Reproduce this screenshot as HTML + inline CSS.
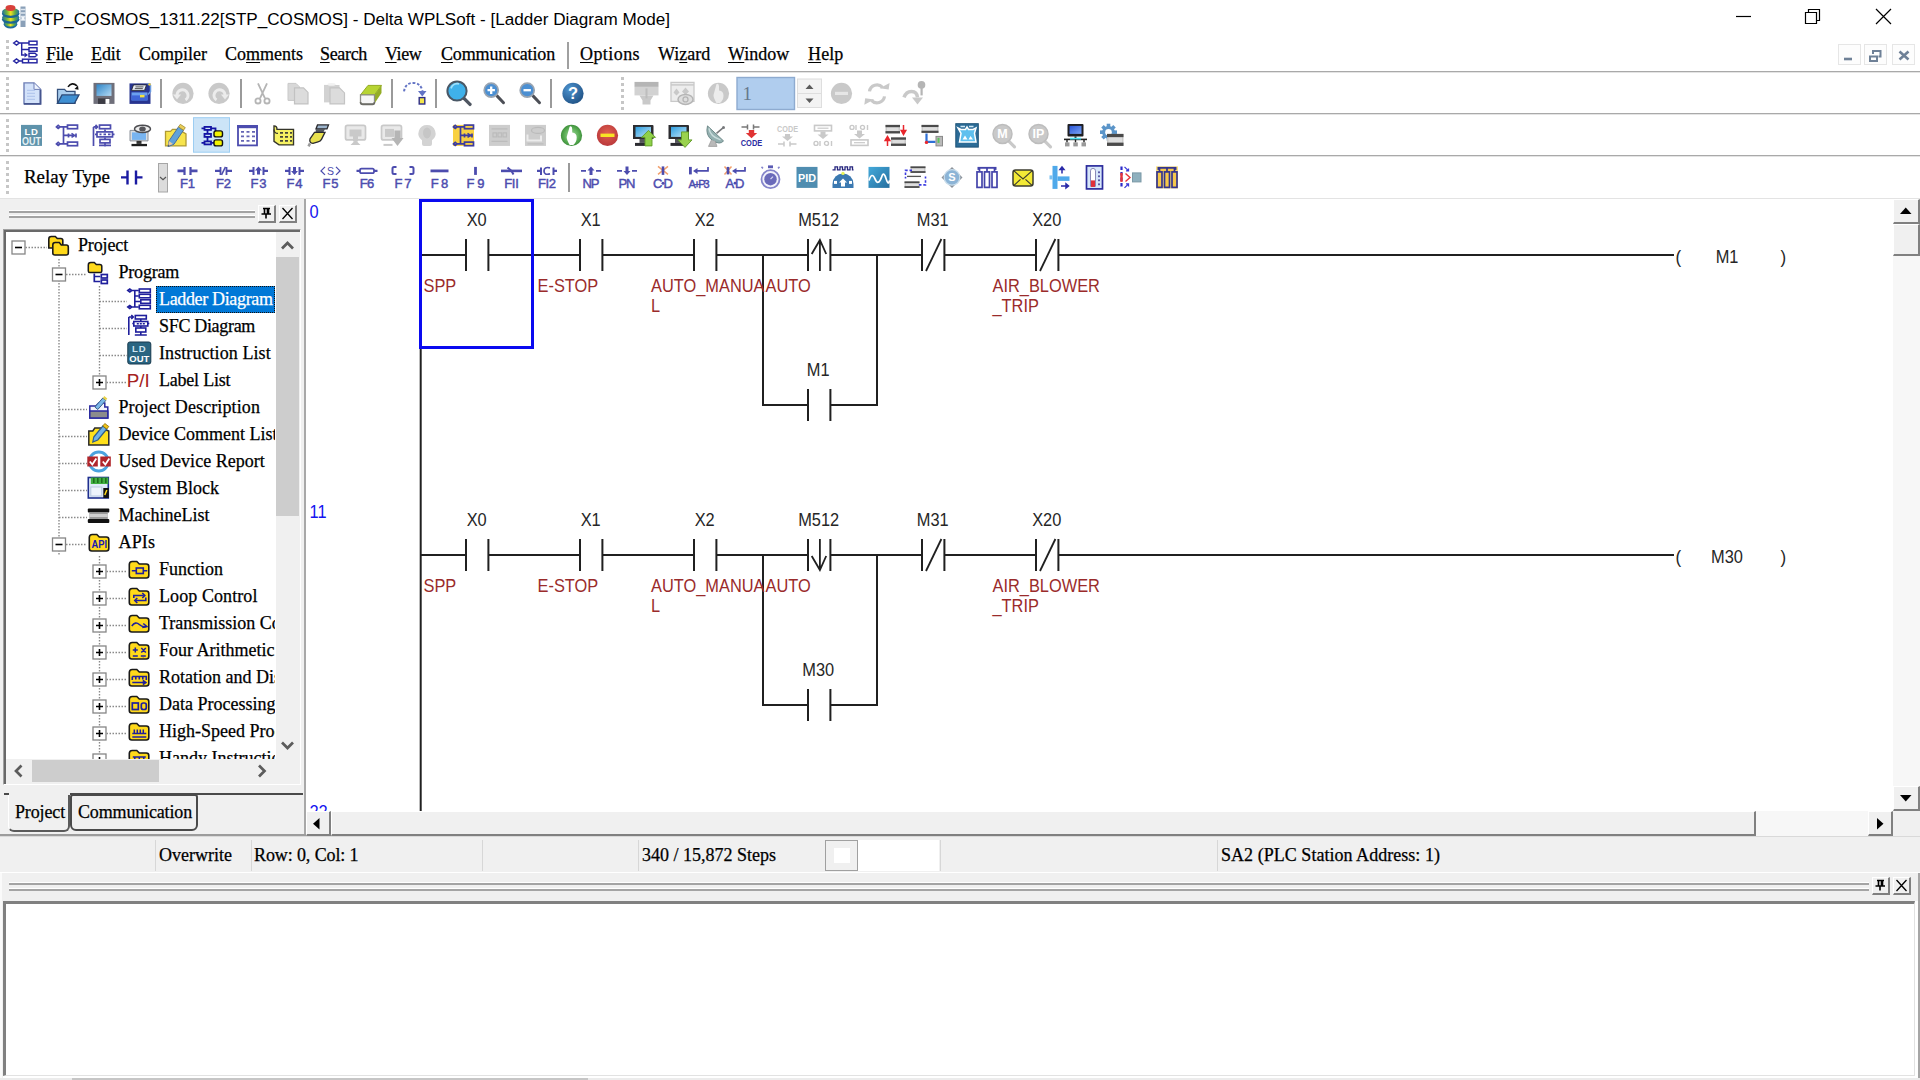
<!DOCTYPE html>
<html><head><meta charset="utf-8"><title>Delta WPLSoft</title>
<style>
*{margin:0;padding:0;box-sizing:border-box}
html,body{width:1920px;height:1080px;overflow:hidden;background:#fff}
body{position:relative;font-family:"Liberation Serif",serif;font-size:18px;color:#000}
.a{position:absolute}
.t{position:absolute;white-space:nowrap;line-height:27px;height:27px;-webkit-text-stroke:.25px currentColor}
.sans{font-family:"Liberation Sans",sans-serif}
.hl{position:absolute;left:0;width:1920px;height:1px}
.b3{position:absolute;background:#f0f0f0;border-style:solid;border-width:1px 2px 2px 1px;border-color:#fff #808080 #808080 #fff}
.grip{position:absolute;height:3px;border-top:1px solid #fff;border-bottom:2px solid #a4a4a4}
.vsep{position:absolute;width:2px;background:#9a9a9a}
.dots{position:absolute;width:2.5px;background-image:linear-gradient(#c6c6c6 42%,transparent 42%);background-size:3px 6px}
u{text-decoration:underline;text-underline-offset:2px;text-decoration-thickness:1px}
svg{position:absolute;overflow:visible}
</style></head><body>
<div class="a sans" style="left:31px;top:8.5px;font-size:17.1px;line-height:22px;white-space:nowrap;color:#000">STP_COSMOS_1311.22[STP_COSMOS] - Delta WPLSoft - [Ladder Diagram Mode]</div>
<svg style="left:1720px;top:0" width="200" height="36" viewBox="1720 0 200 36"><g stroke="#000" stroke-width="1.2" fill="none"><path d="M1736 16.5H1751"/><path d="M1805.5 12.5h11v11h-11z"/><path d="M1808.5 12.5v-3h11v11h-3"/><path d="M1876 9L1891 24M1891 9L1876 24"/></g></svg>
<svg style="left:0;top:0" width="60" height="72" viewBox="0 0 60 72"><defs><linearGradient id="dk" x1="0" y1="0" x2="1" y2="0"><stop offset="0" stop-color="#1f6f9f"/><stop offset=".28" stop-color="#6fb43c"/><stop offset=".5" stop-color="#f2e21e"/><stop offset=".75" stop-color="#5faa46"/><stop offset="1" stop-color="#1f6fa8"/></linearGradient></defs><ellipse cx="10.500" cy="24.300" rx="6.800" ry="4.200" fill="#1d6aa0"/><ellipse cx="10.500" cy="22.800" rx="6.800" ry="3.800" fill="url(#dk)"/><ellipse cx="10.700" cy="19.600" rx="8.800" ry="4.200" fill="#1b6596"/><ellipse cx="10.700" cy="17.600" rx="8.600" ry="3.900" fill="url(#dk)"/><ellipse cx="10.700" cy="13.800" rx="8.800" ry="4.200" fill="#1b6596"/><ellipse cx="10.700" cy="11.800" rx="8.600" ry="3.900" fill="url(#dk)"/><ellipse cx="10.500" cy="8" rx="5" ry="2.900" fill="#d8403a"/><rect x="20.500" y="6.500" width="5" height="20.500" fill="#8aa0b8"/><path d="M20.500 9.500h5M20.500 13h5M20.500 16.500h5M20.500 20h5" stroke="#dfe7f0" stroke-width="1.300"/><rect x="21.500" y="17" width="3" height="3" fill="#f3f6fa"/><g fill="none" stroke="#2626a2" stroke-width="1.450"><path d="M13.700 43l2.800-2 2.800 2-2.800 2zM13.700 61l2.800-2 2.800 2-2.800 2zM19.500 43h9.500M21.700 43v12h3M21.700 49.500h7.300M19.500 61h3"/><rect x="29" y="41.200" width="8" height="3.600"/><rect x="29" y="47.700" width="8" height="3.600"/><path d="M29 53.200h6l2 1.800-2 1.800h-6z"/><rect x="22.500" y="59.200" width="14.500" height="3.600"/><path d="M28.500 59.200v3.600"/></g><path d="M24.500 52.500l3.500 2.500-3.500 2.500z" fill="#2626a2"/></svg>
<div class="t" style="left:46px;top:41.2px;letter-spacing:-0.255px;"><u>F</u>ile</div>
<div class="t" style="left:91px;top:41.2px;letter-spacing:-0.125px;"><u>E</u>dit</div>
<div class="t" style="left:139px;top:41.2px;">Com<u>p</u>iler</div>
<div class="t" style="left:225px;top:41.2px;">Co<u>m</u>ments</div>
<div class="t" style="left:320px;top:41.2px;letter-spacing:-0.33px;"><u>S</u>earch</div>
<div class="t" style="left:385px;top:41.2px;letter-spacing:-0.355px;"><u>V</u>iew</div>
<div class="t" style="left:441px;top:41.2px;letter-spacing:-0.154px;"><u>C</u>ommunication</div>
<div class="t" style="left:580px;top:41.2px;letter-spacing:0.426px;"><u>O</u>ptions</div>
<div class="t" style="left:658px;top:41.2px;">Wi<u>z</u>ard</div>
<div class="t" style="left:728px;top:41.2px;"><u>W</u>indow</div>
<div class="t" style="left:808px;top:41.2px;letter-spacing:0.125px;"><u>H</u>elp</div>
<div class="a" style="left:567px;top:42px;width:1.5px;height:27px;background:#a0a0a0"></div>
<div class="a" style="left:1838px;top:44px;width:23px;height:21px;border:1px solid #e6e6e6;background:#fdfdfd"></div>
<div class="a" style="left:1864px;top:44px;width:23px;height:21px;border:1px solid #e6e6e6;background:#fdfdfd"></div>
<div class="a" style="left:1892px;top:44px;width:23px;height:21px;border:1px solid #e6e6e6;background:#fdfdfd"></div>
<svg style="left:1836px;top:42px" width="84" height="26" viewBox="1836 42 84 26"><g fill="none" stroke="#6f8197" stroke-width="2"><path d="M1844 59H1852" stroke-width="2.6"/><path d="M1870 56.5h7v4.5h-7z"/><path d="M1873 54v-3h7.5v5.5h-2"/><path d="M1899.5 51.5L1908.5 59.5M1908.5 51.5L1899.5 59.5" stroke-width="2.6"/></g></svg>
<div class="hl" style="top:71px;background:#a9a9a9"></div>
<div class="hl" style="top:72px;background:#e4e4e4"></div>
<div class="hl" style="top:113px;background:#a9a9a9"></div>
<div class="hl" style="top:114px;background:#e4e4e4"></div>
<div class="hl" style="top:155px;background:#a9a9a9"></div>
<div class="hl" style="top:156px;background:#e4e4e4"></div>
<div class="hl" style="top:198px;background:#e3e3e3"></div>
<div class="dots" style="left:6px;top:40px;height:30px"></div>
<div class="dots" style="left:6px;top:77px;height:33px"></div>
<div class="dots" style="left:6px;top:119px;height:33px"></div>
<div class="dots" style="left:6px;top:161px;height:33px"></div>
<div class="dots" style="left:621px;top:77px;height:33px"></div>
<svg style="left:0;top:72px" width="1920" height="127" viewBox="0 72 1920 127">
<g transform="translate(32 93.4)"><path d="M-8 -10.500h10l6.500 6.500v14.500h-16.500z" fill="#d3e2fa" stroke="#6e7fb6" stroke-width="1.400"/><path d="M-8 10.500h16.500v-14.500" fill="none" stroke="#46558e" stroke-width="1.800"/><path d="M2 -10.500v6.500h6.500" fill="#eef4ff" stroke="#6e7fb6" stroke-width="1"/><path d="M-5 -3h8M-5 0h8M-5 3h8M-5 6h8" stroke="#b4c8ee" stroke-width="1.200"/></g><g transform="translate(68 93.4)"><path d="M-10.500 -4h7l2 2h8.500v12h-17.500z" fill="#a9cdee" stroke="#34507c" stroke-width="1.300"/><path d="M-10.500 10l4.500-8.500h17l-4.500 8.500z" fill="#3f8fd2" stroke="#2c4a78" stroke-width="1.300"/><path d="M0 -6.500q4-5.500 9-1" fill="none" stroke="#111" stroke-width="1.600"/><path d="M6.500 -4.500l4 .8-.5-4.300z" fill="#111"/></g><g transform="translate(104 93.4)"><rect x="-10.500" y="-10.500" width="21" height="21" fill="#6f6f7a"/><defs><linearGradient id="sv" x1="0" y1="0" x2="1" y2="1"><stop offset="0" stop-color="#2f86c8"/><stop offset="1" stop-color="#b3daf4"/></linearGradient></defs><rect x="-7.500" y="-9" width="15" height="11.500" fill="url(#sv)"/><rect x="-6" y="5" width="12" height="5.500" fill="#3c3c44"/><rect x="1.500" y="5.500" width="4" height="5" fill="#fff"/></g><g transform="translate(140 93.4)"><rect x="-10.500" y="-10" width="21" height="20.500" fill="#27348f"/><path d="M-6.500 -8.500h13l-2 5.500h-13z" fill="#e9edf5" stroke="#222" stroke-width=".8"/><path d="M-4.500 -6.500h8M-5.200 -4.800h8" stroke="#555" stroke-width="1"/><rect x="-8.500" y="-1" width="16" height="8" fill="#6aa0f0"/><rect x="-8.500" y="2" width="16" height="5" fill="#3f66d8"/><rect x="0" y="1.500" width="4.500" height="2.500" fill="#f4e23c"/><path d="M7.500 -10l3 2v6l-2.500 3" fill="none" stroke="#6a9ae0" stroke-width="1.500"/><circle cx="9.500" cy="-9" r="1.200" fill="#f0d030"/></g><g transform="translate(183 93.4)"><circle r="10.600" fill="#c9c9c9"/><path d="M-6 2.500a5.500 5.500 0 1 1 8.500 4" fill="none" stroke="#ececec" stroke-width="3"/><path d="M-10 1h8l-4 5z" fill="#ececec"/></g><g transform="translate(219 93.4)"><circle r="10.600" fill="#c9c9c9"/><path d="M6 2.500a5.500 5.500 0 1 0 -8.500 4" fill="none" stroke="#ececec" stroke-width="3"/><path d="M10 1h-8l4 5z" fill="#ececec"/></g><g transform="translate(262.5 93.4)"><g fill="none" stroke="#b5b5b5" stroke-width="1.800"><path d="M-4.500 -10l7 15M4.500 -10l-7 15"/><circle cx="-4.500" cy="7.500" r="2.600"/><circle cx="4.500" cy="7.500" r="2.600"/></g></g><g transform="translate(298 93.4)"><path d="M-10 -10h8l3.500 3.500v13.500h-11.500z" fill="#d8d8d8" stroke="#c9c9c9" stroke-width="1"/><path d="M-3.500 -5.500h9l4.500 4.500v11.500h-13.500z" fill="#dcdcdc" stroke="#c2c2c2" stroke-width="1.200"/></g><g transform="translate(334 93.4)"><path d="M-10 -8.500h6q2-2.500 5.500 0h4v6h-15.500z" fill="#d0d0d0"/><rect x="-10" y="-8.500" width="12" height="17.500" fill="#d2d2d2"/><path d="M-4 -5.500h9.500l5 5v11h-14.500z" fill="#dcdcdc" stroke="#c4c4c4" stroke-width="1.200"/><ellipse cx="-2.500" cy="-9" rx="4" ry="1.300" fill="#f2f2f2"/></g><g transform="translate(371 93.4)"><path d="M-10.500 1.500l7.500-9.500h13.500l-7 9.500z" fill="#b7d433" stroke="#93ab22" stroke-width="1"/><path d="M3.500 1.500l7-9.500v7.500l-7 10.500z" fill="#94ad25"/><path d="M-10.500 1.500h14v7q0 2-2 2h-10q-2 0-2-2z" fill="#f6f6f6" stroke="#8d8d86" stroke-width="1.300"/><path d="M-10.500 8.500q0 2.500 2.500 2.500h9.500q2 0 2-2.500" fill="none" stroke="#6c6c66" stroke-width="1.600"/></g><g transform="translate(414 93.4)"><path d="M-10 -2q1.500-8.500 9-8.500t9.500 8" fill="none" stroke="#6273c4" stroke-width="2" stroke-dasharray="2.600 1.800"/><path d="M4 -2.500h8.500l-4.250 5.500z" fill="#6273c4"/><rect x="5.200" y="4.200" width="5.600" height="6.400" fill="#f3e54b" stroke="#2d2d86" stroke-width="1.400"/></g><g transform="translate(457.5 93.4)"><path d="M6.500 5l6 6" stroke="#4f5661" stroke-width="3.400" stroke-linecap="round"/><circle cx="-.5" cy="-2.400" r="9.600" fill="#3fb1ea" stroke="#4a5866" stroke-width="2"/><path d="M-6.500 -5a7 7 0 0 1 8-4.500" fill="none" stroke="#9fe0fb" stroke-width="1.800"/></g><g transform="translate(493.5 93.4)"><path d="M3.500 2.500l6.500 6.800" stroke="#4c4f56" stroke-width="3" stroke-linecap="round"/><circle cx="-2.300" cy="-3.200" r="7" fill="#4b8fd2" stroke="#9aa4b0" stroke-width="1.700"/><path d="M-6 -3.200h7.400M-2.300 -6.900v7.400" stroke="#fff" stroke-width="2.300"/></g><g transform="translate(529.5 93.4)"><path d="M3.500 2.500l6.500 6.800" stroke="#4c4f56" stroke-width="3" stroke-linecap="round"/><circle cx="-2.300" cy="-3.200" r="7" fill="#4b8fd2" stroke="#9aa4b0" stroke-width="1.700"/><path d="M-6 -3.200h7.400" stroke="#fff" stroke-width="2.300"/></g><g transform="translate(573 93.4)"><defs><radialGradient id="hg" cx=".35" cy=".3" r=".8"><stop offset="0" stop-color="#4d93cf"/><stop offset="1" stop-color="#1e4f82"/></radialGradient></defs><circle r="10.600" fill="url(#hg)"/><text x="0" y="6" font-family="'Liberation Sans',sans-serif" font-weight="bold" font-size="16.500" fill="#fff" text-anchor="middle">?</text></g><g transform="translate(646.5 93.4)"><rect x="-12" y="-11.500" width="24" height="5" fill="#b5b5b5"/><rect x="-12" y="-6.500" width="24" height="8.500" fill="#d2d2d2"/><path d="M-7 2h14l-3 5v4h-8v-4z" fill="#c9c9c9"/><path d="M0 -5v10" stroke="#bdbdbd" stroke-width="2"/></g><g transform="translate(682.5 93.4)"><rect x="-11.500" y="-11" width="23" height="19" fill="#ededed" stroke="#c9c9c9" stroke-width="1.300"/><path d="M-11.500 -8.500h23" stroke="#c9c9c9" stroke-width="1.500"/><path d="M-6 -5l3 4-3 3-3-3zM3 -6l3.500 4-3.500 3.500-3.500-3.500z" fill="#c9c9c9"/><ellipse cx="3" cy="6" rx="7.500" ry="5" fill="#dedede" stroke="#b5b5b5" stroke-width="1.500"/><circle cx="3" cy="6" r="2.500" fill="none" stroke="#b5b5b5" stroke-width="1.300"/></g><g transform="translate(718.5 93.4)"><circle r="10.600" fill="#c9c9c9"/><path d="M-2 -9.500q2.500-1 2.500 2.500v4q4.500.5 4.500 5t-3.500 7.500h-3.500q-3-5-3-8z" fill="#ececec"/></g><g transform="translate(841.5 93.4)"><circle r="10.600" fill="#c9c9c9"/><rect x="-6.500" y="-1.600" width="13" height="3.200" fill="#e6e6e6"/></g><g transform="translate(877 93.4)"><g fill="none" stroke="#c9c9c9" stroke-width="3.200"><path d="M-7.500 -2a7.500 7.500 0 0 1 13-4"/><path d="M7.500 3a7.500 7.500 0 0 1 -13 4"/></g><path d="M2 -5.500h9v-6.500z" fill="#c9c9c9" transform="rotate(8)"/><path d="M-2 6.500h-9v6.500z" fill="#c9c9c9" transform="rotate(8)"/></g><g transform="translate(914.5 93.4)"><path d="M-10.500 4q2-6 7.500-6t6 6" fill="none" stroke="#c9c9c9" stroke-width="3.500"/><path d="M-2.500 4h11l-5.500 7z" fill="#c9c9c9"/><circle cx="7" cy="-8.500" r="3.800" fill="#b5b5b5"/><rect x="6" y="-6" width="2.200" height="8" fill="#b5b5b5"/></g>
<g transform="translate(31.5 135.4)"><rect x="-10.500" y="-10.500" width="21" height="21" fill="#5f93ab"/><text x="0" y="-.3" font-family="'Liberation Sans',sans-serif" font-weight="bold" font-size="9.500" fill="#fff" text-anchor="middle" letter-spacing=".8">LD</text><text x="0" y="9.300" font-family="'Liberation Sans',sans-serif" font-weight="bold" font-size="10" fill="#e8f2f6" text-anchor="middle" textLength="19" lengthAdjust="spacingAndGlyphs">OUT</text></g><g transform="translate(67.5 135.4)"><g fill="none" stroke="#4c4cae" stroke-width="1.700"><path d="M-4 -8.500v17M-7.500 -8.500h3.500M-7.500 8.500h3.500M-4 -8.500h4M-4 0h10M-4 8.500h4M-11 -8.500l1.700-1.500 1.800 1.500-1.800 1.500zM-11 8.500l1.700-1.500 1.800 1.500-1.800 1.500z"/><rect x="0" y="-10.300" width="10" height="3.600"/><rect x="0" y="6.700" width="10" height="3.600"/><path d="M1 -2v4M4 -2l3 2-3 2M8.500 -2v4"/></g></g><g transform="translate(103.5 135.4)"><g fill="none" stroke="#4c4cae" stroke-width="1.700"><path d="M-10 -8.500v19M-10 -8.500h3.500M-8 -10.500l2 2-2 2M1.500 -6v2.500M1.500 2v2M1.500 7.500v3.500M-4.500 10h12M-6.500 -1h-2M11 -1h-2"/><rect x="-4" y="-10.300" width="11" height="3.600"/><rect x="-6.500" y="-3.500" width="15.500" height="5"/><rect x="-3.500" y="4" width="10" height="3.500"/><path d="M-4 -1h2M0 -1h2.500M4.500 -1h2.500"/></g></g><g transform="translate(139.5 135.4)"><path d="M-9.500 -5h16q2 0 2 2v8.500h-18z" fill="#d9dde2" stroke="#8b9098" stroke-width="1"/><rect x="-7.500" y="-3" width="14" height="7.500" fill="#78b4f0"/><rect x="-3" y="5.500" width="5" height="3" fill="#333"/><rect x="-8" y="8.500" width="15.500" height="2.300" fill="#1e1e1e"/><ellipse cx="3" cy="-6.500" rx="8" ry="3.700" fill="#ececec" stroke="#4c4c50" stroke-width="1.500"/><ellipse cx="3" cy="-6.500" rx="3.300" ry="2.500" fill="#55555a"/></g><g transform="translate(175.5 135.4)"><path d="M-10 -4h5l2-2h6l7.500 4.500v12h-20.500z" fill="#f7e44c" stroke="#b09a34" stroke-width="1.300"/><path d="M-6.500 5.500l9.500-14 5 3.300-9.500 14-6 2.500z" fill="#5fa2da" stroke="#4a6f9c" stroke-width="1"/><path d="M3 -8.500l1.800-2.600 5 3.300-1.800 2.600z" fill="#e9cf5a" stroke="#a08a30" stroke-width=".8"/><path d="M-6.500 5.500l-1 5 5-2z" fill="#e8c9a0"/><path d="M-7.500 10.500l1.500-.6-1.200-.9z" fill="#333"/></g><g transform="translate(211.5 135.4)"><rect x="-18" y="-17.700" width="36" height="34.500" fill="#cce4f7" stroke="#9ccdf2" stroke-width="1"/><g fill="none" stroke="#1414a4" stroke-width="1.800"><rect x="-7" y="-8.500" width="6.500" height="3"/><rect x="-7" y="-1.500" width="6.500" height="3"/><rect x="-7" y="6" width="6.500" height="3"/><path d="M-4 -5.500v4M-4 1.500v4.500M-.5 -7h4.500v3M-10 -7h3M-10 7.500h3M-.5 7.500h3"/></g><rect x="2.500" y="-4.500" width="8.500" height="6" rx="2" fill="#f2f200" stroke="#111" stroke-width="1.400"/><rect x="2.500" y="4.500" width="8.500" height="6" rx="2" fill="#f2f200" stroke="#111" stroke-width="1.400"/></g><g transform="translate(247.5 135.4)"><rect x="-9.500" y="-9.500" width="19" height="19.500" fill="#fff" stroke="#4c4cae" stroke-width="1.800"/><rect x="-10.400" y="-10.400" width="20.800" height="3.200" fill="#4c4cae"/><g stroke="#6464b4" stroke-width="1.700" stroke-dasharray="3 2.500"><path d="M-6.500 -3.500h14.500M-6.500 1h14.500M-6.500 5.500h14.500"/></g></g><g transform="translate(283.5 135.4)"><path d="M-9.500 -9.500q3 0 3 3.500h16.500v15.500h-14.500l-5-3.500z" fill="#f6f262" stroke="#35352a" stroke-width="1.400"/><path d="M-9.500 -6q0 4 4 4" fill="none" stroke="#35352a" stroke-width="1.300"/><g stroke="#45453a" stroke-width="1.600" stroke-dasharray="3 2"><path d="M-3.500 -2.500h12M-3.500 1.500h12M-3.500 5.500h12"/></g></g><g transform="translate(319.5 135.4)"><path d="M-2 -10.500h11l-1.500 4h-11z" fill="#9cb4cc" stroke="#2a2a2e" stroke-width="1.300"/><path d="M-3.500 -6.500h9l-1.500 3h-8z" fill="#55595f"/><path d="M-9.500 3.500l4.500-6.500h10.500l-3.500 7q-1 2-3.500 2.500l-5 1.500q-4-.5-3-4.500z" fill="#e9e14f" stroke="#2a2a2e" stroke-width="1.300"/><path d="M-9.500 8l-1.500 3" stroke="#9a9a9a" stroke-width="2.500"/></g><g transform="translate(355.5 135.4)"><rect x="-10" y="-10" width="20" height="14.500" rx="2" fill="#e9e9e9" stroke="#c9c9c9" stroke-width="1.700"/><path d="M-6 -6h12v7h-3.500v5h-5v-5h-3.500z" fill="#c9c9c9"/><path d="M-5 9.500l5-5 5 5z" fill="#c9c9c9"/></g><g transform="translate(391.5 135.4)"><rect x="-10" y="-10" width="20" height="14.500" rx="2" fill="#e9e9e9" stroke="#c9c9c9" stroke-width="1.700"/><rect x="-6.500" y="-6.500" width="9" height="8" fill="#c9c9c9"/><rect x="-8" y="8.500" width="9" height="2" fill="#c9c9c9"/><path d="M3 -5h6v7.500h3l-6 8-6-8h3z" fill="#b5b5b5"/></g><g transform="translate(427 135.4)"><path d="M0 -10.500a8.500 8.500 0 0 1 5 15.400v3.600q0 2-2 2h-6q-2 0-2-2v-3.600a8.500 8.500 0 0 1 5-15.400z" fill="#d3d3d3"/><ellipse cx="0" cy="-2.500" rx="4" ry="5.500" fill="#c6c6c6"/></g><g transform="translate(463.5 135.4)"><rect x="-10.500" y="-10.500" width="21" height="21" fill="#f8d142"/><g fill="none" stroke="#3c3ca0" stroke-width="1.700"><path d="M-3 -8.500v17M-3 -8.500h4M-3 0h12M-3 8.500h4M-10 -8.500l1.700-1.500 1.800 1.500-1.800 1.500zM-10 8.500l1.700-1.500 1.800 1.500-1.800 1.500zM-6.500 -8.500h3.500M-6.500 8.500h3.500"/><rect x="1" y="-10.300" width="9" height="3.600"/><rect x="1" y="6.700" width="9" height="3.600"/><path d="M1 -2v4M4 -2l3 2-3 2M8.500 -2v4"/></g></g><g transform="translate(499.5 135.4)"><rect x="-10.500" y="-10.500" width="21" height="21" fill="#cdcdcd"/><g fill="none" stroke="#bcbcbc" stroke-width="1.200"><path d="M-8 -6.500h16M-8 6h16"/><rect x="-6.500" y="-2.500" width="3.500" height="4"/><rect x="-1.500" y="-2.500" width="3.500" height="4"/><rect x="3.500" y="-2.500" width="3.500" height="4"/></g></g><g transform="translate(535.5 135.4)"><rect x="-10.500" y="-10.500" width="21" height="21" fill="#cdcdcd"/><path d="M-8 -1v6h13.500v-5" fill="none" stroke="#ececec" stroke-width="2"/><ellipse cx="2.500" cy="-5" rx="6.500" ry="3" fill="none" stroke="#bababa" stroke-width="1.200"/><path d="M-8 8.500h16" stroke="#bcbcbc" stroke-width="1.200"/></g><g transform="translate(571.5 135.4)"><defs><radialGradient id="gg" cx=".5" cy=".5" r=".6"><stop offset="0" stop-color="#a5dba0"/><stop offset=".6" stop-color="#58ac52"/><stop offset="1" stop-color="#2f7d2f"/></radialGradient></defs><circle r="10.600" fill="url(#gg)"/><path d="M-1.800 -9q2.500-1 2.500 2.500v3.500q4.500.5 4.500 5t-3.500 7.500h-3.500q-3-5-3-8z" fill="#fff"/></g><g transform="translate(607.5 135.4)"><defs><radialGradient id="rg" cx=".5" cy=".4" r=".65"><stop offset="0" stop-color="#e0604f"/><stop offset="1" stop-color="#b7353a"/></radialGradient></defs><circle r="10.600" fill="url(#rg)"/><rect x="-7" y="-1.800" width="14" height="3.400" fill="#f8e425"/></g><g transform="translate(644 135.4)"><path d="M-11 -10.500h19.500q1 0 1 1v13h-20.500z" fill="#2c2c30"/><defs><linearGradient id="mgu" x1="0" y1="0" x2="1" y2="1"><stop offset="0" stop-color="#2f9fe0"/><stop offset="1" stop-color="#bfe4f8"/></linearGradient></defs><rect x="-8.500" y="-8.500" width="15.500" height="10" fill="url(#mgu)"/><rect x="-4.500" y="3.500" width="6" height="4" fill="#55555a"/><rect x="-9" y="7.500" width="15" height="3" fill="#2c2c30"/><path d="M4.500 -5l7 7h-3.500v8.500h-7v-8.500h-3.500z" fill="#8fd04a" stroke="#5f9a26" stroke-width=".9"/></g><g transform="translate(679.5 135.4)"><path d="M-11 -10.500h19.500q1 0 1 1v13h-20.500z" fill="#2c2c30"/><defs><linearGradient id="mgd" x1="0" y1="0" x2="1" y2="1"><stop offset="0" stop-color="#2f9fe0"/><stop offset="1" stop-color="#bfe4f8"/></linearGradient></defs><rect x="-8.500" y="-8.500" width="15.500" height="10" fill="url(#mgd)"/><rect x="-4.500" y="3.500" width="6" height="4" fill="#55555a"/><rect x="-9" y="7.500" width="15" height="3" fill="#2c2c30"/><path d="M2 -3.500h7v8h3.500l-7 7.500-7-7.500h3.500z" fill="#9ad24e" stroke="#5f9a26" stroke-width=".9"/></g><g transform="translate(715.5 135.4)"><path d="M-8 -9.500q-2.500 9.500 5 14.500t11 .5z" fill="#93b0b0" stroke="#6f8a8a" stroke-width="1"/><path d="M-6.500 -7q1 8 11.500 11.500" fill="none" stroke="#c9dcdc" stroke-width="1.500"/><path d="M1 -2l6.500-5.500" stroke="#77797c" stroke-width="1.600"/><circle cx="8" cy="-8" r="1.500" fill="#77797c"/><path d="M-4 4.500l-3 6.500h8.500l-2-5.500" fill="#b9b9b9" stroke="#9a9a9a" stroke-width=".8"/></g><g transform="translate(751.5 135.4)"><g stroke="#787878" stroke-width="1.500" fill="none"><path d="M-10 -8.500h6M-4 -11v5M2 -11v5M2 -8.500h6"/></g><path d="M-2.700 -5.500h5.400v3h3l-5.700 5.300-5.700-5.300h3z" fill="#e03434"/><text x="0" y="11" font-family="'Liberation Sans',sans-serif" font-weight="bold" font-size="9.500" fill="#2c2ca2" text-anchor="middle" textLength="21.500" lengthAdjust="spacingAndGlyphs">CODE</text></g><g transform="translate(787.5 135.4)"><text x="0" y="-3.500" font-family="'Liberation Sans',sans-serif" font-weight="bold" font-size="9.500" fill="#c9c9c9" text-anchor="middle" textLength="21" lengthAdjust="spacingAndGlyphs">CODE</text><path d="M-2.500 -1.500h5v2.500h3l-5.500 4.500-5.500-4.500h3z" fill="#c9c9c9"/><g stroke="#c9c9c9" stroke-width="1.500" fill="none"><path d="M-9.500 8.500h6M-3.500 6v5M2.500 6v5M2.500 8.500h6.500"/></g></g><g transform="translate(823 135.4)"><rect x="-8.500" y="-10" width="17" height="5.500" fill="#fff" stroke="#c9c9c9" stroke-width="1.600"/><path d="M-5.500 -7.200h11" stroke="#c9c9c9" stroke-width="1.200"/><path d="M-2.500 -4h5v3h3l-5.500 4.500-5.500-4.500h3z" fill="#c9c9c9"/><g fill="none" stroke="#c9c9c9" stroke-width="1.400"><circle cx="-7" cy="8" r="2"/><path d="M-3 5.500v5M8.500 5.500v5"/><circle cx="3.500" cy="8" r="2"/></g></g><g transform="translate(859.5 135.4)"><g fill="none" stroke="#c9c9c9" stroke-width="1.400"><circle cx="-7.500" cy="-8" r="2"/><path d="M-3.500 -10.500v5M8 -10.500v5"/><circle cx="3" cy="-8" r="2"/></g><path d="M-2.500 -5h5v3.500h3l-5.500 4.500-5.500-4.500h3z" fill="#c9c9c9"/><rect x="-8.500" y="4.500" width="17" height="5.500" fill="#fff" stroke="#c9c9c9" stroke-width="1.600"/><path d="M-5.500 7.300h11" stroke="#c9c9c9" stroke-width="1.200"/></g><g transform="translate(895.5 135.4)"><rect x="-10" y="-10.5" width="14.5" height="8.5" fill="#c9c9c9"/><rect x="-8.5" y="-8.205" width="11.5" height="3.91" fill="#dedede"/><rect x="-10" y="-10.5" width="14.5" height="2.295" fill="#4a4a4a"/><rect x="-10" y="-4.295" width="14.5" height="2.295" fill="#4a4a4a"/><rect x="-4.5" y="2" width="15" height="8.5" fill="#c9c9c9"/><rect x="-3.0" y="4.295" width="12" height="3.91" fill="#dedede"/><rect x="-4.5" y="2" width="15" height="2.295" fill="#4a4a4a"/><rect x="-4.5" y="8.205" width="15" height="2.295" fill="#4a4a4a"/><g stroke="#e8262c" stroke-width="1.500" fill="#e8262c"><path d="M8 -10.500v9.500M5.700 -5l2.300 4 2.300-4zM-8 10.500v-9.500M-10.300 5l2.300-4 2.300 4z" /></g></g><g transform="translate(931.5 135.4)"><rect x="-10" y="-10.5" width="17" height="8" fill="#c9c9c9"/><rect x="-8.5" y="-8.34" width="14" height="3.6799999999999997" fill="#dedede"/><rect x="-10" y="-10.5" width="17" height="2.16" fill="#4a4a4a"/><rect x="-10" y="-4.66" width="17" height="2.16" fill="#4a4a4a"/><path d="M-5 -2v8.500h9" fill="none" stroke="#2d6fd6" stroke-width="2.200"/><circle cx="-5" cy="7" r="1.700" fill="#e8262c"/><rect x="4.500" y="1" width="6.500" height="9.500" fill="#b9b9b9" stroke="#8a8a8a" stroke-width="1"/><rect x="6" y="2.500" width="2" height="5" fill="#5ec45e"/></g><g transform="translate(967.5 135.4)"><rect x="-11.700" y="-11.700" width="22.500" height="23.400" fill="#2c6c97"/><rect x="-11.700" y="-11.700" width="22.500" height="23.400" fill="none" stroke="#1f5478" stroke-width="1"/><path d="M-9.500 -7.500l3 1.500h4.500l1.500-2.500 1.500 2.500h4.500l3-1.500-1.500 5.500 1.500 8.500h-16.500l1.500-8.500z" fill="#5fc0ee" stroke="#fff" stroke-width="1.500"/><path d="M-5 4l2.500-4 2.500 4zM1 4l2-3.500 2.500 3.500z" fill="#fff"/><path d="M-7 -9h4.500M1.500 -9h4.500" stroke="#cfe8f6" stroke-width="1.500"/></g><g transform="translate(1003.5 135.4)"><path d="M5.500 6l5.500 5.500" stroke="#c9c9c9" stroke-width="3.200" stroke-linecap="round"/><circle cx="-1" cy="-1.500" r="9.500" fill="#c9c9c9" stroke="#bdbdbd" stroke-width="1.500"/><text x="-1" y="2.800" font-family="'Liberation Sans',sans-serif" font-weight="bold" font-size="12.500" fill="#fff" text-anchor="middle">M</text></g><g transform="translate(1039.5 135.4)"><path d="M5.500 6l5.500 5.500" stroke="#c9c9c9" stroke-width="3.200" stroke-linecap="round"/><circle cx="-1" cy="-1.500" r="9.500" fill="#c9c9c9" stroke="#bdbdbd" stroke-width="1.500"/><text x="-1" y="2.800" font-family="'Liberation Sans',sans-serif" font-weight="bold" font-size="12.500" fill="#fff" text-anchor="middle">IP</text></g><g transform="translate(1075.5 135.4)"><rect x="-8" y="-11.500" width="16" height="12.500" rx="1" fill="#1e1e22"/><defs><linearGradient id="ng" x1="0" y1="0" x2="1" y2="1"><stop offset="0" stop-color="#2a55d8"/><stop offset="1" stop-color="#7aa4f4"/></linearGradient></defs><rect x="-6" y="-9.500" width="12" height="8" fill="url(#ng)"/><path d="M0 1v3" stroke="#222" stroke-width="2"/><path d="M-11.500 4h23" stroke="#222" stroke-width="1.600"/><path d="M-5.500 3.200h11" stroke="#4fe0f0" stroke-width="1.800"/><g stroke="#222" stroke-width="1.400"><path d="M-8.500 4v3M0 4v3M8.500 4v3"/></g><rect x="-10.500" y="7" width="4.500" height="4" fill="#9a9a9a"/><rect x="-2.200" y="7" width="4.500" height="4" fill="#9a9a9a"/><rect x="6" y="7" width="4.500" height="4" fill="#9a9a9a"/></g><g transform="translate(1111.5 135.4)"><g transform="translate(-3 -3.200)"><g fill="#5b95c9"><rect x="-1.800" y="-8.500" width="3.600" height="17" transform="rotate(0)"/><rect x="-1.800" y="-8.500" width="3.600" height="17" transform="rotate(45)"/><rect x="-1.800" y="-8.500" width="3.600" height="17" transform="rotate(90)"/><rect x="-1.800" y="-8.500" width="3.600" height="17" transform="rotate(135)"/><circle r="6.300"/></g><circle r="3.300" fill="#fff"/></g><rect x="-4.5" y="-1.5" width="16.5" height="12" fill="#c9c9c9"/><rect x="-3.0" y="1.7400000000000002" width="13.5" height="5.52" fill="#dedede"/><rect x="-4.5" y="-1.5" width="16.5" height="3.24" fill="#4a4a4a"/><rect x="-4.5" y="7.26" width="16.5" height="3.24" fill="#4a4a4a"/></g>
<text x="24" y="183.300" font-family="'Liberation Serif',serif" font-size="18.900" fill="#000" stroke="#000" stroke-width=".25">Relay Type</text><g transform="translate(131.5 177.4)"><path d="M-10.500 0h6.500M4.500 0h6.500" stroke="#1a1aa2" stroke-width="2.400"/><path d="M-4 -7v14M4.500 -7v14" stroke="#1a1aa2" stroke-width="2.400"/></g><rect x="158.500" y="163.500" width="9" height="28.500" fill="#dcdcdc" stroke="#a6a6a6" stroke-width="1"/><path d="M160 177l3 2.600 3-2.600" fill="none" stroke="#555" stroke-width="1.200"/><g transform="translate(187.5 177.4)"><g stroke="#4c4cae" fill="none"><path d="M-10 -6.500h7M3 -6.500h7" stroke-width="2.600"/><path d="M-3 -10.500v8M3 -10.500v8" stroke-width="2.200"/></g><text x="0" y="10.5" font-family="'Liberation Sans',sans-serif" font-size="13" fill="#4c4cae" stroke="#4c4cae" stroke-width=".45" text-anchor="middle" textLength="15" lengthAdjust="spacing">F1</text></g><g transform="translate(223.5 177.4)"><g stroke="#4c4cae" fill="none"><path d="M-8.500 -6.500h5.500M3 -6.500h5.500" stroke-width="2.400"/><path d="M-3 -10.500v8M3 -10.500v8" stroke-width="1.800"/><path d="M2 -10.500l-4 8" stroke-width="1.500"/></g><text x="0" y="10.5" font-family="'Liberation Sans',sans-serif" font-size="13" fill="#4c4cae" stroke="#4c4cae" stroke-width=".45" text-anchor="middle" textLength="15" lengthAdjust="spacing">F2</text></g><g transform="translate(258.5 177.4)"><g stroke="#4c4cae" fill="none"><path d="M-9.500 -6.500h4.500M5 -6.500h4.500" stroke-width="2.400"/><path d="M-5 -10.500v8M5 -10.500v8" stroke-width="2"/></g><path d="M0 -11l3.500 4h-2v4h-3v-4h-2z" fill="#4c4cae"/><text x="0" y="10.5" font-family="'Liberation Sans',sans-serif" font-size="13" fill="#4c4cae" stroke="#4c4cae" stroke-width=".45" text-anchor="middle" textLength="16" lengthAdjust="spacing">F3</text></g><g transform="translate(294.5 177.4)"><g stroke="#4c4cae" fill="none"><path d="M-9.500 -6.500h4.500M5 -6.500h4.500" stroke-width="2.400"/><path d="M-5 -10.500v8M5 -10.500v8" stroke-width="2"/></g><path d="M0 -2.500l3.500-4h-2v-4h-3v4h-2z" fill="#4c4cae"/><text x="0" y="10.5" font-family="'Liberation Sans',sans-serif" font-size="13" fill="#4c4cae" stroke="#4c4cae" stroke-width=".45" text-anchor="middle" textLength="16" lengthAdjust="spacing">F4</text></g><g transform="translate(330.5 177.4)"><g stroke="#4c4cae" fill="none" stroke-width="1.300"><path d="M-5.500 -10.500l-4 4 4 4M5.500 -10.500l4 4-4 4"/></g><text x="0" y="-2.800" font-family="'Liberation Sans',sans-serif" font-size="10.500" fill="#4c4cae" text-anchor="middle">S</text><text x="0" y="10.5" font-family="'Liberation Sans',sans-serif" font-size="13" fill="#4c4cae" stroke="#4c4cae" stroke-width=".45" text-anchor="middle" textLength="16" lengthAdjust="spacing">F5</text></g><g transform="translate(367 177.4)"><g stroke="#4c4cae" fill="none"><path d="M-10.500 -6.500h3.500M7 -6.500h3.500" stroke-width="2.400"/><rect x="-7" y="-8.800" width="14" height="4.600" rx="1.500" stroke-width="1.800"/></g><text x="0" y="10.5" font-family="'Liberation Sans',sans-serif" font-size="13" fill="#4c4cae" stroke="#4c4cae" stroke-width=".45" text-anchor="middle" textLength="14.5" lengthAdjust="spacing">F6</text></g><g transform="translate(403 177.4)"><g stroke="#4c4cae" fill="none" stroke-width="2"><path d="M-6.500 -10.500h-2.500q-1.500 0-1.500 1.500v4q0 1.500 1.500 1.500h2.500M6.500 -10.500h2.500q1.500 0 1.500 1.500v4q0 1.500-1.500 1.500h-2.500"/></g><text x="0" y="10.5" font-family="'Liberation Sans',sans-serif" font-size="13" fill="#4c4cae" stroke="#4c4cae" stroke-width=".45" text-anchor="middle" textLength="17" lengthAdjust="spacing">F7</text></g><g transform="translate(439.5 177.4)"><path d="M-9 -6.500h18" stroke="#4c4cae" stroke-width="2.800"/><text x="0" y="10.5" font-family="'Liberation Sans',sans-serif" font-size="13" fill="#4c4cae" stroke="#4c4cae" stroke-width=".45" text-anchor="middle" textLength="17.5" lengthAdjust="spacing">F8</text></g><g transform="translate(475.5 177.4)"><path d="M0 -10.500v8" stroke="#4c4cae" stroke-width="2.800"/><text x="0" y="10.5" font-family="'Liberation Sans',sans-serif" font-size="13" fill="#4c4cae" stroke="#4c4cae" stroke-width=".45" text-anchor="middle" textLength="18" lengthAdjust="spacing">F9</text></g><g transform="translate(511.5 177.4)"><g stroke="#4c4cae" fill="none"><path d="M-10.500 -6.500h21" stroke-width="2.600"/><path d="M-4 -10l4 3.500 2 3.500" stroke-width="2"/></g><text x="0" y="10.5" font-family="'Liberation Sans',sans-serif" font-size="13" fill="#4c4cae" stroke="#4c4cae" stroke-width=".45" text-anchor="middle" textLength="14.5" lengthAdjust="spacing">FII</text></g><g transform="translate(547 177.4)"><g stroke="#4c4cae" fill="none"><path d="M-10 -6.500h4M6 -6.500h4" stroke-width="2.400"/><path d="M-6 -10v7.500M6.500 -10v7.500" stroke-width="2"/><path d="M3 -9.500q-6-1.500-6 3t6 3" stroke-width="1.700"/></g><text x="0" y="10.5" font-family="'Liberation Sans',sans-serif" font-size="13" fill="#4c4cae" stroke="#4c4cae" stroke-width=".45" text-anchor="middle" textLength="18" lengthAdjust="spacing">FI2</text></g><rect x="568" y="163" width="2" height="29" fill="#9a9a9a"/><g transform="translate(591 177.4)"><g stroke="#4c4cae" fill="none" stroke-width="1.800"><path d="M-10 -6.500h5M5 -6.500h5"/></g><path d="M0 -11l3.500 4h-2v4.500h-3v-4.500h-2z" fill="#4c4cae"/><text x="0" y="10.5" font-family="'Liberation Sans',sans-serif" font-size="13" fill="#4c4cae" stroke="#4c4cae" stroke-width=".45" text-anchor="middle" textLength="17" lengthAdjust="spacing">NP</text></g><g transform="translate(627 177.4)"><g stroke="#4c4cae" fill="none" stroke-width="1.800"><path d="M-10 -6.500h5M5 -6.500h5"/></g><path d="M0 -2.500l3.500-4h-2v-4.500h-3v4.500h-2z" fill="#4c4cae"/><text x="0" y="10.5" font-family="'Liberation Sans',sans-serif" font-size="13" fill="#4c4cae" stroke="#4c4cae" stroke-width=".45" text-anchor="middle" textLength="17" lengthAdjust="spacing">PN</text></g><g transform="translate(663 177.4)"><path d="M-5 -11l10 8M5 -11l-10 8" stroke="#f2a06e" stroke-width="1.500"/><path d="M0 -11v8.500" stroke="#4c4cae" stroke-width="2.600"/><circle cx="0" cy="5.800" r="1.500" fill="#4c4cae"/><text x="0" y="10.5" font-family="'Liberation Sans',sans-serif" font-size="13" fill="#4c4cae" stroke="#4c4cae" stroke-width=".45" text-anchor="middle" textLength="20" lengthAdjust="spacing">C D</text></g><g transform="translate(699 177.4)"><rect x="-10" y="-10.500" width="2.800" height="7.500" fill="#4c4cae"/><g stroke="#4c4cae" fill="none" stroke-width="1.700"><path d="M-4 -6.500h13v-4"/></g><path d="M-6 -6.500l4.500-3v6z" fill="#4c4cae"/><text x="0" y="10.5" font-family="'Liberation Sans',sans-serif" font-size="11" fill="#4c4cae" stroke="#4c4cae" stroke-width=".45" text-anchor="middle" textLength="21" lengthAdjust="spacing">A+P3</text></g><g transform="translate(735 177.4)"><path d="M-10.500 -11l7 8M-3.500 -11l-7 8" stroke="#f2a06e" stroke-width="1.500"/><path d="M-7 -10.500v7.500" stroke="#4c4cae" stroke-width="2.600"/><g stroke="#4c4cae" fill="none" stroke-width="1.700"><path d="M-1 -6.500h11v-4"/></g><path d="M-3 -6.500l4.500-3v6z" fill="#4c4cae"/><circle cx="0" cy="5.800" r="1.400" fill="#4c4cae"/><text x="0" y="10.5" font-family="'Liberation Sans',sans-serif" font-size="13" fill="#4c4cae" stroke="#4c4cae" stroke-width=".45" text-anchor="middle" textLength="19" lengthAdjust="spacing">A D</text></g><g transform="translate(770.5 177.4)"><rect x="-2.500" y="-12" width="5" height="2.800" fill="#5c5cb4"/><path d="M-7.500 -9l-1.500-1.500M7.500 -9l1.500-1.500" stroke="#8585cc" stroke-width="1.500"/><circle cx="0" cy="1.800" r="9" fill="#f2f2fb" stroke="#8484ca" stroke-width="1.800"/><circle cx="0" cy="1.800" r="6.200" fill="#6a6aba"/><path d="M0 1.800l2.500-2.500" stroke="#d8d8f4" stroke-width="1.200"/></g><g transform="translate(807 177.4)"><rect x="-10.500" y="-10.500" width="21" height="21" fill="#4f8db0"/><text x="0" y="4.300" font-family="'Liberation Sans',sans-serif" font-weight="bold" font-size="11.500" fill="#fff" text-anchor="middle" textLength="18" lengthAdjust="spacingAndGlyphs">PID</text></g><g transform="translate(843 177.4)"><path d="M-10.500 -7.500h2.500v-3h2.500v3h2.500v-3h2.500v3h2.500v-3h2.500v3h2.500v-3h2.500v3h1" fill="none" stroke="#26267e" stroke-width="1.300"/><path d="M-10.500 10.500v-4a10.500 10.500 0 0 1 21 0v4z" fill="#3b79b1"/><circle cx="0" cy="-4" r="1.700" fill="#e9f45a"/><rect x="-9" y="3.500" width="3" height="3" fill="#fff"/><rect x="6" y="3.500" width="3" height="3" fill="#fff"/><path d="M0 1l4 4h-2v4h-4v-4h-2z" fill="#fff"/></g><g transform="translate(879 177.4)"><defs><linearGradient id="wg" x1="0" y1="0" x2="1" y2="1"><stop offset="0" stop-color="#43a9da"/><stop offset="1" stop-color="#256e9e"/></linearGradient></defs><rect x="-10.500" y="-10.500" width="21" height="21" fill="url(#wg)"/><path d="M-10 3q3-9 6-1.500t6.500-1.500q2-7 4.500 1t3.500 2" fill="none" stroke="#fff" stroke-width="1.700"/></g><g transform="translate(915 177.4)"><rect x="-4.5" y="-11" width="15" height="6.5" fill="#c9c9c9"/><rect x="-3.0" y="-9.245" width="12" height="2.9899999999999998" fill="#dedede"/><rect x="-4.5" y="-11" width="15" height="1.7550000000000001" fill="#4a4a4a"/><rect x="-4.5" y="-6.255" width="15" height="1.7550000000000001" fill="#4a4a4a"/><rect x="-10.5" y="4" width="15" height="6.5" fill="#c9c9c9"/><rect x="-9.0" y="5.755" width="12" height="2.9899999999999998" fill="#dedede"/><rect x="-10.5" y="4" width="15" height="1.7550000000000001" fill="#4a4a4a"/><rect x="-10.5" y="8.745" width="15" height="1.7550000000000001" fill="#4a4a4a"/><path d="M-3 -7h-6.500v8M4 7.500h6.500v-8.500" fill="none" stroke="#3a3ae0" stroke-width="1.600" stroke-dasharray="2.500 1.800"/><path d="M-8 -1h14" stroke="#555" stroke-width="1.300"/></g><g transform="translate(952 177.4)"><path d="M0 -10.500l10.500 10.500-10.500 10.500-10.500-10.500z" fill="#8b929a"/><circle r="7.800" fill="#8cb4d6" stroke="#c7dceb" stroke-width="1.300"/><text x="0" y="4" font-family="'Liberation Sans',sans-serif" font-weight="bold" font-size="11" fill="#fff" text-anchor="middle">S</text></g><g transform="translate(987 177.4)"><rect x="-9.500" y="-10.500" width="19" height="3" fill="#4444aa"/><g fill="#fff" stroke="#4444aa" stroke-width="1.700"><path d="M-7.500 -5.500v-4h15v4M0 -9.500v4"/><rect x="-10" y="-5.500" width="5" height="15.500"/><rect x="-2.500" y="-5.500" width="5" height="15.500"/><rect x="5" y="-5.500" width="5" height="15.500"/></g></g><g transform="translate(1023 177.9)"><rect x="-10" y="-8" width="20" height="16" rx="2.500" fill="#f3ea36" stroke="#3d3d30" stroke-width="1.500"/><path d="M-9 -7l9 8 9-8M-9 7.500l6.500-6M9 7.500l-6.500-6" fill="none" stroke="#3d3d30" stroke-width="1.200"/></g><g transform="translate(1059 177.4)"><rect x="-6.500" y="-11.500" width="5" height="23" fill="#4fa9ea"/><rect x="-9.500" y="-2" width="3" height="4" fill="#7cc2f2"/><rect x="-1.500" y="-1" width="12" height="4.500" fill="#4fa9ea"/><g stroke="#2a2aa8" stroke-width="1.500" fill="#2a2aa8"><path d="M3 -4v-6M1 -8l2-2.500 2 2.500zM2 8.500h7M7 6.500l2.500 2-2.500 2z"/></g></g><g transform="translate(1094.5 177.4)"><rect x="-8" y="-11.500" width="16" height="23" fill="#d6e6fa" stroke="#2c2c9c" stroke-width="1.700"/><path d="M-4 9v-15.500a2.500 2.500 0 0 1 5 0v15.500z" fill="#fff" stroke="#8a8ab8" stroke-width="1"/><rect x="-3.500" y="3" width="4" height="6.500" fill="#e0303a"/><g fill="#5a5aa8"><rect x="3.500" y="-6" width="2" height="1.800"/><rect x="3.500" y="-2" width="2" height="1.800"/><rect x="3.500" y="2" width="2" height="1.800"/><rect x="3.500" y="6" width="2" height="1.800"/></g></g><g transform="translate(1131 177.4)"><path d="M-9.500 -11v22" stroke="#2c2cc8" stroke-width="2.200" stroke-dasharray="3.500 2"/><path d="M-9.500 -4.500v9" stroke="#e8343a" stroke-width="2.400"/><path d="M-5.500 -4l4.500 4-4.500 4" fill="none" stroke="#e8343a" stroke-width="1.400"/><g stroke="#3a3ad8" stroke-width="1.300" fill="none"><path d="M-6.500 -10.500l4 4M-2.500 -9v2.500h-2.500M-6.500 10.500l4-4M-2.500 9v-2.500h-2.500"/></g><rect x="1.500" y="-4.500" width="8.500" height="9" fill="#8fb0be" stroke="#7a98a6" stroke-width="1"/></g><g transform="translate(1167 177.4)"><rect x="-11" y="-11" width="22" height="22" fill="#fbe07a"/><rect x="-9.500" y="-10.500" width="19" height="3" fill="#34348e"/><g fill="#f6c84a" stroke="#34348e" stroke-width="1.700"><path d="M-7.500 -5.500v-4h15v4M0 -9.500v4"/><rect x="-10" y="-5.500" width="5" height="15.500"/><rect x="-2.500" y="-5.500" width="5" height="15.500"/><rect x="5" y="-5.500" width="5" height="15.500"/></g></g>
<rect x="160" y="79" width="2" height="29" fill="#9a9a9a"/>
<rect x="240" y="79" width="2" height="29" fill="#9a9a9a"/>
<rect x="391" y="79" width="2" height="29" fill="#9a9a9a"/>
<rect x="435" y="79" width="2" height="29" fill="#9a9a9a"/>
<rect x="550" y="79" width="2" height="29" fill="#9a9a9a"/>
<rect x="737" y="77.500" width="57.500" height="32" fill="#b0cdee" stroke="#8eabd0" stroke-width="1.400"/>
<text x="742.500" y="99.500" font-family="'Liberation Serif',serif" font-size="19" fill="#66788c">1</text>
<rect x="797.500" y="79" width="24" height="28.500" fill="#f3f3f3" stroke="#dedede" stroke-width="1"/><path d="M797.500 93.500h24" stroke="#dedede"/>
<path d="M805.500 89h8l-4-4.500zM805.500 98.500h8l-4 4.500z" fill="#5c5c5c"/>
</svg>
<div class="a" style="left:0px;top:199px;width:304px;height:637px;background:#f0f0f0"></div>
<div class="a" style="left:304px;top:199px;width:2px;height:637px;background:#a8a8a8"></div>
<div class="grip" style="left:9px;top:210px;width:246px"></div>
<div class="grip" style="left:9px;top:215px;width:246px"></div>
<div class="b3" style="left:258px;top:205px;width:18px;height:18px"></div>
<div class="b3" style="left:279px;top:205px;width:18px;height:18px"></div>
<svg style="left:258px;top:205px" width="40" height="18" viewBox="258 205 40 18"><g stroke="#000" fill="none"><path d="M263 208.5h7M264.5 208.5v5M268.5 208.5v5M267.5 208.5v5M261.5 214h9.5M266 214v4.5" stroke-width="1.6"/><path d="M282.5 208L292.5 219M292.5 208L282.5 219" stroke-width="1.3"/></g></svg>
<div class="a" style="left:3px;top:229px;width:298px;height:556px;background:#fff;border-style:solid;border-width:1px 1px 1px 1px;border-color:#a0a0a0 #fff #fff #a0a0a0"></div>
<div class="a" style="left:4px;top:230px;width:296px;height:554px;background:#fff;border-style:solid;border-width:2px 0 0 2px;border-color:#696969"></div>
<div class="a" style="left:70px;top:793px;width:233px;height:2px;background:#4a4a4a"></div>
<div class="a" style="left:4px;top:793px;width:5px;height:2px;background:#4a4a4a"></div>
<div class="a" style="left:8px;top:795px;width:62px;height:37px;background:#f0f0f0;border-style:solid;border-color:#fff #5a5a5a #5a5a5a #fff;border-width:0 2px 2px 1px;border-radius:0 0 6px 6px"></div>
<div class="a" style="left:70px;top:794px;width:128px;height:37px;background:#f0f0f0;border:2px solid #4a4a4a;border-top-width:2px;border-radius:3px 3px 6px 6px"></div>
<div class="t" style="left:15px;top:799.0px;letter-spacing:-0.143px;">Project</div>
<div class="t" style="left:78px;top:799.0px;letter-spacing:-0.154px;">Communication</div>
<div class="a" style="left:0px;top:834px;width:1920px;height:2px;background:#9c9c9c"></div>
<div class="a" style="left:0px;top:836px;width:1920px;height:1px;background:#d9d9d9"></div>
<div class="a" style="left:0px;top:837px;width:1920px;height:35px;background:#f0f0f0"></div>
<div class="a" style="left:0px;top:872px;width:1920px;height:1px;background:#fff"></div>
<div class="a" style="left:155px;top:840px;width:1px;height:31px;background:#d7d7d7"></div>
<div class="a" style="left:251px;top:840px;width:1px;height:31px;background:#d7d7d7"></div>
<div class="a" style="left:482px;top:840px;width:1px;height:31px;background:#d7d7d7"></div>
<div class="a" style="left:638px;top:840px;width:1px;height:31px;background:#d7d7d7"></div>
<div class="a" style="left:940px;top:840px;width:1px;height:31px;background:#d7d7d7"></div>
<div class="a" style="left:1217px;top:840px;width:1px;height:31px;background:#d7d7d7"></div>
<div class="t" style="left:159px;top:842.0px;">Overwrite</div>
<div class="t" style="left:254px;top:842.0px;letter-spacing:-0.109px;">Row: 0, Col: 1</div>
<div class="t" style="left:642px;top:842.0px;">340 / 15,872 Steps</div>
<div class="t" style="left:1221px;top:842.0px;letter-spacing:0.035px;">SA2 (PLC Station Address: 1)</div>
<div class="a" style="left:825px;top:840px;width:33px;height:31px;background:#f0f0f0;border:1px solid #a0a0a0"></div>
<div class="a" style="left:834px;top:848px;width:16px;height:15px;background:#fff"></div>
<div class="a" style="left:858px;top:840px;width:81px;height:31px;background:#fff"></div>
<div class="a" style="left:0px;top:873px;width:1920px;height:207px;background:#f0f0f0"></div>
<div class="grip" style="left:9px;top:882px;width:1860px"></div>
<div class="grip" style="left:9px;top:888px;width:1860px"></div>
<div class="b3" style="left:1872px;top:877px;width:18px;height:18px"></div>
<div class="b3" style="left:1893px;top:877px;width:18px;height:18px"></div>
<svg style="left:1872px;top:877px" width="40" height="18" viewBox="1872 877 40 18"><g stroke="#000" fill="none"><path d="M1877 880.5h7M1878.5 880.5v5M1882.5 880.5v5M1881.5 880.5v5M1875.5 886h9.5M1880 886v4.5" stroke-width="1.6"/><path d="M1896.5 880L1906.5 891M1906.5 880L1896.5 891" stroke-width="1.3"/></g></svg>
<div class="a" style="left:3px;top:901px;width:1915px;height:177px;background:#fff"></div>
<div class="a" style="left:3px;top:901px;width:1912px;height:175px;background:#fff;border-style:solid;border-width:3px 1px 1px 3px;border-color:#808080 #e2e2e2 #e2e2e2 #808080"></div>
<div class="a" style="left:1918px;top:873px;width:2px;height:207px;background:#a6a6a6"></div>
<div class="a" style="left:0px;top:873px;width:2px;height:205px;background:#fafafa"></div>
<div class="a" style="left:0px;top:1078px;width:1920px;height:2px;background:#ececec"></div>
<div class="a" style="left:72px;top:1078px;width:516px;height:2px;background:#c6c6c6"></div>
<svg style="left:306px;top:199px;overflow:hidden" width="1587" height="612" viewBox="306 199 1587 612" font-family="'Liberation Sans',sans-serif">
<rect x="306" y="199" width="1587" height="612" fill="#fff"/>
<g fill="none" stroke="#202020" stroke-width="2"><path d="M420.7 200V811"/><path d="M420 255H466.0M488.4 255H580.0M602.4000000000001 255H694.0M716.4000000000001 255H808.0M830.4000000000001 255H922.0M944.4000000000001 255H1036.0M1058.4 255H1674M763 255V405H808.0M830.4000000000001 405H877V255"/><path d="M466.0 239V271M488.4 239V271"/><path d="M580.0 239V271M602.4000000000001 239V271"/><path d="M694.0 239V271M716.4000000000001 239V271"/><path d="M808.0 239V271M830.4000000000001 239V271"/><path d="M819.9000000000001 240V271M811.7 254L819.9000000000001 240L826.2 254" stroke-width="1.8"/><path d="M922.0 239V271M944.4000000000001 239V271"/><path d="M941.4000000000001 239L926.0 271" stroke-width="1.8"/><path d="M1036.0 239V271M1058.4 239V271"/><path d="M1055.4 239L1040.0 271" stroke-width="1.8"/><path d="M808.0 389V421M830.4000000000001 389V421"/><path d="M420 555H466.0M488.4 555H580.0M602.4000000000001 555H694.0M716.4000000000001 555H808.0M830.4000000000001 555H922.0M944.4000000000001 555H1036.0M1058.4 555H1674M763 555V705H808.0M830.4000000000001 705H877V555"/><path d="M466.0 539V571M488.4 539V571"/><path d="M580.0 539V571M602.4000000000001 539V571"/><path d="M694.0 539V571M716.4000000000001 539V571"/><path d="M808.0 539V571M830.4000000000001 539V571"/><path d="M819.9000000000001 539V570M811.7 556L819.9000000000001 570L826.2 556" stroke-width="1.8"/><path d="M922.0 539V571M944.4000000000001 539V571"/><path d="M941.4000000000001 539L926.0 571" stroke-width="1.8"/><path d="M1036.0 539V571M1058.4 539V571"/><path d="M1055.4 539L1040.0 571" stroke-width="1.8"/><path d="M808.0 689V721M830.4000000000001 689V721"/></g>
<rect x="420.5" y="200.5" width="112" height="147" fill="none" stroke="#0a0af0" stroke-width="3"/>
<text transform="translate(476.7 225.5) scale(1 1.1)" text-anchor="middle" fill="#262626" font-size="16.4">X0</text><text transform="translate(590.7 225.5) scale(1 1.1)" text-anchor="middle" fill="#262626" font-size="16.4">X1</text><text transform="translate(704.7 225.5) scale(1 1.1)" text-anchor="middle" fill="#262626" font-size="16.4">X2</text><text transform="translate(818.7 225.5) scale(1 1.1)" text-anchor="middle" fill="#262626" font-size="16.4">M512</text><text transform="translate(932.7 225.5) scale(1 1.1)" text-anchor="middle" fill="#262626" font-size="16.4">M31</text><text transform="translate(1046.7 225.5) scale(1 1.1)" text-anchor="middle" fill="#262626" font-size="16.4">X20</text><text transform="translate(818.2 375.5) scale(1 1.1)" text-anchor="middle" fill="#262626" font-size="16.4">M1</text><text transform="translate(423.5 292) scale(1 1.1)" text-anchor="start" fill="#9a2b2b" font-size="16.4">SPP</text><text transform="translate(537.5 292) scale(1 1.1)" text-anchor="start" fill="#9a2b2b" font-size="16.4">E-STOP</text><text transform="translate(651 292) scale(1 1.1)" text-anchor="start" fill="#9a2b2b" font-size="16.4">AUTO_MANUA</text><text transform="translate(651 312) scale(1 1.1)" text-anchor="start" fill="#9a2b2b" font-size="16.4">L</text><text transform="translate(765.5 292) scale(1 1.1)" text-anchor="start" fill="#9a2b2b" font-size="16.4">AUTO</text><text transform="translate(992.5 292) scale(1 1.1)" text-anchor="start" fill="#9a2b2b" font-size="16.4">AIR_BLOWER</text><text transform="translate(992.5 312) scale(1 1.1)" text-anchor="start" fill="#9a2b2b" font-size="16.4">_TRIP</text><text transform="translate(1675.5 262.5) scale(1 1.08)" text-anchor="start" fill="#262626" font-size="17">(</text><text transform="translate(1780.5 262.5) scale(1 1.08)" text-anchor="start" fill="#262626" font-size="17">)</text><text transform="translate(1727 262.7) scale(1 1.1)" text-anchor="middle" fill="#262626" font-size="16.4">M1</text><text transform="translate(476.7 525.5) scale(1 1.1)" text-anchor="middle" fill="#262626" font-size="16.4">X0</text><text transform="translate(590.7 525.5) scale(1 1.1)" text-anchor="middle" fill="#262626" font-size="16.4">X1</text><text transform="translate(704.7 525.5) scale(1 1.1)" text-anchor="middle" fill="#262626" font-size="16.4">X2</text><text transform="translate(818.7 525.5) scale(1 1.1)" text-anchor="middle" fill="#262626" font-size="16.4">M512</text><text transform="translate(932.7 525.5) scale(1 1.1)" text-anchor="middle" fill="#262626" font-size="16.4">M31</text><text transform="translate(1046.7 525.5) scale(1 1.1)" text-anchor="middle" fill="#262626" font-size="16.4">X20</text><text transform="translate(818.2 675.5) scale(1 1.1)" text-anchor="middle" fill="#262626" font-size="16.4">M30</text><text transform="translate(423.5 592) scale(1 1.1)" text-anchor="start" fill="#9a2b2b" font-size="16.4">SPP</text><text transform="translate(537.5 592) scale(1 1.1)" text-anchor="start" fill="#9a2b2b" font-size="16.4">E-STOP</text><text transform="translate(651 592) scale(1 1.1)" text-anchor="start" fill="#9a2b2b" font-size="16.4">AUTO_MANUA</text><text transform="translate(651 612) scale(1 1.1)" text-anchor="start" fill="#9a2b2b" font-size="16.4">L</text><text transform="translate(765.5 592) scale(1 1.1)" text-anchor="start" fill="#9a2b2b" font-size="16.4">AUTO</text><text transform="translate(992.5 592) scale(1 1.1)" text-anchor="start" fill="#9a2b2b" font-size="16.4">AIR_BLOWER</text><text transform="translate(992.5 612) scale(1 1.1)" text-anchor="start" fill="#9a2b2b" font-size="16.4">_TRIP</text><text transform="translate(1675.5 562.5) scale(1 1.08)" text-anchor="start" fill="#262626" font-size="17">(</text><text transform="translate(1780.5 562.5) scale(1 1.08)" text-anchor="start" fill="#262626" font-size="17">)</text><text transform="translate(1727 562.7) scale(1 1.1)" text-anchor="middle" fill="#262626" font-size="16.4">M30</text>
<text transform="translate(309.5 217.5) scale(1 1.1)" text-anchor="start" fill="#1414f0" font-size="16.4">0</text>
<text transform="translate(309.5 517.5) scale(1 1.1)" text-anchor="start" fill="#1414f0" font-size="16.4">11</text>
<text transform="translate(309.5 817.5) scale(1 1.1)" text-anchor="start" fill="#1414f0" font-size="16.4">22</text>
</svg>
<div class="a" style="left:1893px;top:199px;width:27px;height:612px;background:#f7f7f7"></div>
<div class="b3" style="left:1893px;top:199px;width:27px;height:25px"></div>
<div class="b3" style="left:1893px;top:224px;width:27px;height:32px"></div>
<div class="b3" style="left:1893px;top:786px;width:27px;height:25px"></div>
<div class="a" style="left:306px;top:811px;width:1587px;height:25px;background:#f7f7f7"></div>
<div class="a" style="left:1893px;top:811px;width:27px;height:25px;background:#f0f0f0"></div>
<div class="b3" style="left:306px;top:811px;width:25px;height:25px"></div>
<div class="b3" style="left:331px;top:811px;width:1425px;height:25px"></div>
<div class="b3" style="left:1868px;top:811px;width:25px;height:25px"></div>
<svg style="left:306px;top:199px" width="1614" height="637" viewBox="306 199 1614 637"><g fill="#000"><path d="M1900 214h11.5l-5.75-6.5z"/><path d="M1900 795h11.5l-5.75 6.5z"/><path d="M1877 818v11.5l6.5-5.75z"/><path d="M319.5 818v11.5l-6.5-5.75z"/></g></svg>
<div class="a" style="left:6px;top:232px;width:268.5px;height:526.5px;overflow:hidden;background:#fff">
<svg style="left:0;top:0" width="270" height="560" viewBox="6 232 270 560"><path d="M59 259V556M99.500 286V381M99.500 556V800M25.5 247.5H47M66.0 274.5H87M99.5 301.5H127M99.5 328.5H127M99.5 355.5H127M106.5 382.5H127M59.0 409.5H87M59.0 436.5H87M59.0 463.5H87M59.0 490.5H87M59.0 517.5H87M66.0 544.5H87M106.5 571.5H127M106.5 598.5H127M106.5 625.5H127M106.5 652.5H127M106.5 679.5H127M106.5 706.5H127M106.5 733.5H127M106.5 760.5H127" stroke="#8a8a8a" stroke-width="1.400" stroke-dasharray="1.500 1.500" fill="none"/><rect x="12.0" y="241.0" width="13" height="13" fill="#fff" stroke="#868686" stroke-width="1.300"/><path d="M15.0 247.5H22.0" stroke="#000" stroke-width="1.600"/><g transform="translate(46.8 233)"><path d="M2 6q0-2.500 2.500-2.500h4l2 2h3.500q2 0 2 2v7.500h-14z" fill="#ffd91a" stroke="#1a1a1a" stroke-width="1.6"/><path d="M6 12q0-2.500 2.500-2.500h4l2 2.500h5q2 0 2 2v6q0 2-2 2h-11.500q-2 0-2-2z" fill="#ffd91a" stroke="#1a1a1a" stroke-width="1.6"/></g><rect x="52.5" y="268.0" width="13" height="13" fill="#fff" stroke="#868686" stroke-width="1.300"/><path d="M55.5 274.5H62.5" stroke="#000" stroke-width="1.600"/><g transform="translate(86.8 260)"><path d="M1.500 5q0-2.500 2.500-2.500h3.500l2 2h3.500q2 0 2 2v4.500q0 1.500-1.500 1.500h-10.500q-1.500 0-1.500-1.500z" fill="#ffd91a" stroke="#1a1a1a" stroke-width="1.500"/><g fill="none" stroke="#1f1f9c" stroke-width="1.700"><path d="M7.500 13.500v8h6M7.500 16.500h6"/><rect x="14.500" y="14.500" width="6" height="3.500" fill="#fff"/><rect x="14.500" y="20" width="6" height="3.500" fill="#fff"/></g></g><g transform="translate(126.8 287)"><g fill="none" stroke="#1f1f9c" stroke-width="1.600"><path d="M8 3.500v16.500M8 3.500h4M8 9h4M8 14.500h6M8 20h4M1 3.500l2-1.500 2 1.500-2 1.500zM1 20l2-1.500 2 1.500-2 1.500zM5 3.500h3M5 20h3"/><rect x="12.500" y="2" width="11" height="3.500"/><rect x="12.500" y="7.300" width="11" height="3.500"/><rect x="14" y="12.800" width="9.500" height="3.500"/><rect x="12.500" y="18.300" width="11" height="3.500"/></g></g><g transform="translate(126.8 314)"><g fill="none" stroke="#1f1f9c" stroke-width="1.600"><path d="M2 3v18M2 3h4M4.500 1l2 2-2 2M14 5v2M14 12v2M14 18v3M8 21h12M7 9.500h-1.500M22.500 9.500h-1.500"/><rect x="8.500" y="1.500" width="11" height="3.500"/><rect x="7" y="7.500" width="14" height="4.500"/><rect x="9" y="14" width="10" height="4"/><path d="M10 9.700h2M13 9.700h2M16 9.700h2"/></g></g><g transform="translate(126.8 341)"><rect x="1" y="1" width="23" height="22" rx="2" fill="#2a6581"/><rect x="1" y="1" width="23" height="22" rx="2" fill="none" stroke="#17394e" stroke-width="1"/><text x="12.500" y="10.500" font-family="'Liberation Sans',sans-serif" font-weight="bold" font-size="9.500" fill="#cfe6f2" text-anchor="middle" letter-spacing="1">LD</text><text x="12.500" y="21" font-family="'Liberation Sans',sans-serif" font-weight="bold" font-size="9.500" fill="#fff" text-anchor="middle">OUT</text></g><rect x="93.0" y="376.0" width="13" height="13" fill="#fff" stroke="#868686" stroke-width="1.300"/><path d="M96.0 382.5H103.0M99.5 379.0V386.0" stroke="#000" stroke-width="1.600"/><g transform="translate(126.8 368)"><text x="0" y="19" font-family="'Liberation Sans',sans-serif" font-size="19" fill="#a52222" textLength="23" lengthAdjust="spacingAndGlyphs">P/I</text></g><g transform="translate(86.8 395)"><path d="M3 11h6l3-3h6v4h3v11h-18z" fill="#f4f4fb" stroke="#2a2aa0" stroke-width="1.500"/><rect x="3" y="16" width="18" height="7" fill="#8c8c8c" stroke="#2a2aa0" stroke-width="1.500"/><path d="M8 12l8-9 3 2.500-8 9z" fill="#7ab7e8" stroke="#3a5f8a" stroke-width="1"/><path d="M16 3l1.500-2 3 2.500-1.500 2z" fill="#e8d24a"/></g><g transform="translate(86.8 422)"><path d="M2 9h4l2-3h6l8 3v14h-20z" fill="#ffe01a" stroke="#2b2b2b" stroke-width="1.500"/><path d="M7 15l9-11 4 3-9 11-5 2z" fill="#6fb1e6" stroke="#2f5d8c" stroke-width="1.200"/><path d="M16 4l2-2.500 4 3-2 2.500z" fill="#f0c419" stroke="#8a6d00" stroke-width=".8"/></g><g transform="translate(86.8 449)"><circle cx="12" cy="12.500" r="9.500" fill="none" stroke="#4aa3df" stroke-width="3"/><rect x="0.500" y="7.500" width="10.500" height="10" fill="#b0262b"/><rect x="13.500" y="7.500" width="10.500" height="10" fill="#b0262b"/><path d="M3 12.500l2.500 3 4-6M16 12.500l2.500 3 4-6" fill="none" stroke="#fff" stroke-width="1.800"/></g><g transform="translate(86.8 476)"><rect x="1.500" y="1.500" width="20" height="20.500" fill="#dfeaf8" stroke="#1f2f8f" stroke-width="1.600"/><rect x="4" y="1.500" width="17.500" height="6.500" fill="#3fae3f"/><path d="M7 2v5M11 2v5M15 2v5M19 2v5" stroke="#1d6b1d" stroke-width="1.500"/><rect x="4" y="11" width="11" height="9" fill="#eef4fc" stroke="#b9c8e0" stroke-width="1"/><rect x="16.500" y="12" width="5.500" height="10" fill="#111"/><path d="M18 19l2-5" stroke="#ffd91a" stroke-width="1.500"/></g><g transform="translate(86.8 503)"><rect x="1" y="5.500" width="21.500" height="4" rx="1" fill="#111"/><rect x="1" y="16" width="21.500" height="4" rx="1" fill="#111"/><rect x="2.500" y="9.500" width="18.500" height="6.500" fill="#9a9a9a"/><rect x="2.500" y="11" width="18.500" height="3" fill="#cfcfcf"/></g><rect x="52.5" y="538.0" width="13" height="13" fill="#fff" stroke="#868686" stroke-width="1.300"/><path d="M55.5 544.5H62.5" stroke="#000" stroke-width="1.600"/><g transform="translate(86.8 530)"><g transform="translate(1 2)"><path d="M1.5 5.5q0-3 3-3h4.5l2.5 2.5h7q2.5 0 2.5 2.5v9q0 2.500-2.500 2.500h-14.500q-2.500 0-2.500-2.500z" fill="#ffd91a" stroke="#1a1a1a" stroke-width="1.6"/><text x="11.500" y="15.500" font-family="'Liberation Sans',sans-serif" font-weight="bold" font-size="10" fill="#1818b4" text-anchor="middle" textLength="15.500" lengthAdjust="spacingAndGlyphs">API</text></g></g><rect x="93.0" y="565.0" width="13" height="13" fill="#fff" stroke="#868686" stroke-width="1.300"/><path d="M96.0 571.5H103.0M99.5 568.0V575.0" stroke="#000" stroke-width="1.600"/><g transform="translate(126.8 557)"><g transform="translate(1 2)"><path d="M1.5 5.5q0-3 3-3h4.5l2.5 2.5h7q2.5 0 2.5 2.5v9q0 2.500-2.500 2.500h-14.500q-2.500 0-2.500-2.500z" fill="#ffd91a" stroke="#1a1a1a" stroke-width="1.6"/><g fill="none" stroke="#1f1f9c" stroke-width="1.600"><rect x="8.500" y="9" width="7" height="5.500"/><path d="M4 11.800h4.500M15.500 11.800h4"/></g></g></g><rect x="93.0" y="592.0" width="13" height="13" fill="#fff" stroke="#868686" stroke-width="1.300"/><path d="M96.0 598.5H103.0M99.5 595.0V602.0" stroke="#000" stroke-width="1.600"/><g transform="translate(126.8 584)"><g transform="translate(1 2)"><path d="M1.5 5.5q0-3 3-3h4.5l2.5 2.5h7q2.5 0 2.5 2.5v9q0 2.500-2.500 2.500h-14.500q-2.500 0-2.500-2.500z" fill="#ffd91a" stroke="#1a1a1a" stroke-width="1.6"/><g fill="none" stroke="#1f1f9c" stroke-width="1.600"><path d="M6 12v-2.500h10M18 11.500v3h-10"/><path d="M14.500 7l2.500 2.500-2.500 2.500M9.500 12l-2.500 2.500 2.500 2.500"/></g></g></g><rect x="93.0" y="619.0" width="13" height="13" fill="#fff" stroke="#868686" stroke-width="1.300"/><path d="M96.0 625.5H103.0M99.5 622.0V629.0" stroke="#000" stroke-width="1.600"/><g transform="translate(126.8 611)"><g transform="translate(1 2)"><path d="M1.5 5.5q0-3 3-3h4.5l2.5 2.5h7q2.5 0 2.5 2.5v9q0 2.500-2.500 2.500h-14.500q-2.500 0-2.500-2.500z" fill="#ffd91a" stroke="#1a1a1a" stroke-width="1.6"/><g fill="none" stroke="#1f1f9c" stroke-width="1.600"><path d="M4 13q3.500-5 7.500-1.500t7 1.500"/><path d="M15.500 10.500l3.500 3-4.500 1"/></g></g></g><rect x="93.0" y="646.0" width="13" height="13" fill="#fff" stroke="#868686" stroke-width="1.300"/><path d="M96.0 652.5H103.0M99.5 649.0V656.0" stroke="#000" stroke-width="1.600"/><g transform="translate(126.8 638)"><g transform="translate(1 2)"><path d="M1.5 5.5q0-3 3-3h4.5l2.5 2.5h7q2.5 0 2.5 2.5v9q0 2.500-2.500 2.500h-14.500q-2.500 0-2.500-2.500z" fill="#ffd91a" stroke="#1a1a1a" stroke-width="1.6"/><g fill="none" stroke="#1f1f9c" stroke-width="1.500"><path d="M5 10h5M7.500 7.500v5M5 16h5M13.500 8l4.500 4.500M18 8l-4.500 4.500M13 16h5M15.500 14.200v.1M15.500 17.800v.1"/></g></g></g><rect x="93.0" y="673.0" width="13" height="13" fill="#fff" stroke="#868686" stroke-width="1.300"/><path d="M96.0 679.5H103.0M99.5 676.0V683.0" stroke="#000" stroke-width="1.600"/><g transform="translate(126.8 665)"><g transform="translate(1 2)"><path d="M1.5 5.5q0-3 3-3h4.5l2.5 2.5h7q2.5 0 2.5 2.5v9q0 2.500-2.500 2.500h-14.500q-2.500 0-2.500-2.500z" fill="#ffd91a" stroke="#1a1a1a" stroke-width="1.6"/><g fill="none" stroke="#1f1f9c" stroke-width="1.600"><path d="M4.500 9.500h14v3.500M4.500 9.500v3.500M8 9.500v3M11.500 9.500v3M15 9.500v3M4.500 15.500h13"/><path d="M15 13.500l3 2-3 2"/></g></g></g><rect x="93.0" y="700.0" width="13" height="13" fill="#fff" stroke="#868686" stroke-width="1.300"/><path d="M96.0 706.5H103.0M99.5 703.0V710.0" stroke="#000" stroke-width="1.600"/><g transform="translate(126.8 692)"><g transform="translate(1 2)"><path d="M1.5 5.5q0-3 3-3h4.5l2.5 2.5h7q2.5 0 2.5 2.5v9q0 2.500-2.500 2.500h-14.500q-2.500 0-2.500-2.500z" fill="#ffd91a" stroke="#1a1a1a" stroke-width="1.6"/><g fill="none" stroke="#1f1f9c" stroke-width="1.700"><rect x="4.500" y="9" width="6" height="6.500"/><rect x="13.500" y="9" width="5" height="6.500" rx="2"/></g></g></g><rect x="93.0" y="727.0" width="13" height="13" fill="#fff" stroke="#868686" stroke-width="1.300"/><path d="M96.0 733.5H103.0M99.5 730.0V737.0" stroke="#000" stroke-width="1.600"/><g transform="translate(126.8 719)"><g transform="translate(1 2)"><path d="M1.5 5.5q0-3 3-3h4.5l2.5 2.5h7q2.5 0 2.5 2.5v9q0 2.500-2.500 2.500h-14.500q-2.500 0-2.500-2.500z" fill="#ffd91a" stroke="#1a1a1a" stroke-width="1.6"/><g fill="none" stroke="#1f1f9c" stroke-width="1.500"><path d="M4.500 12.500h14M4.500 16h14M6.500 12.500v-4M9.500 12.500v-4M12.500 12.500v-4M15.500 12.500v-4M6.500 14v.1M11 14v.1M15.500 14v.1"/></g></g></g><rect x="93.0" y="754.0" width="13" height="13" fill="#fff" stroke="#868686" stroke-width="1.300"/><path d="M96.0 760.5H103.0M99.5 757.0V764.0" stroke="#000" stroke-width="1.600"/><g transform="translate(126.8 746)"><g transform="translate(1 2)"><path d="M1.5 5.5q0-3 3-3h4.5l2.5 2.5h7q2.5 0 2.5 2.5v9q0 2.500-2.500 2.500h-14.500q-2.500 0-2.500-2.500z" fill="#ffd91a" stroke="#1a1a1a" stroke-width="1.6"/><g fill="none" stroke="#1f1f9c" stroke-width="1.500"><path d="M5 9h13M7 9v5h9v-5M11.500 9v5"/></g></g></g></svg>
<div class="t" style="left:72.0px;top:0px;letter-spacing:-0.143px">Project</div>
<div class="t" style="left:112.5px;top:27px;letter-spacing:-0.2px">Program</div>
<div class="a" style="left:150.0px;top:54px;width:119px;height:27px;background:#0078d7;outline:1px dotted #111;outline-offset:-1px"></div>
<div class="t" style="left:153.0px;top:54px;color:#fff;letter-spacing:-0.346px">Ladder Diagram</div>
<div class="t" style="left:153.0px;top:81px;letter-spacing:-0.32px">SFC Diagram</div>
<div class="t" style="left:153.0px;top:108px;letter-spacing:0.078px">Instruction List</div>
<div class="t" style="left:153.0px;top:135px;letter-spacing:-0.223px">Label List</div>
<div class="t" style="left:112.5px;top:162px;letter-spacing:0.107px">Project Description</div>
<div class="t" style="left:112.5px;top:189px;">Device Comment List</div>
<div class="t" style="left:112.5px;top:216px;letter-spacing:0.017px">Used Device Report</div>
<div class="t" style="left:112.5px;top:243px;">System Block</div>
<div class="t" style="left:112.5px;top:270px;">MachineList</div>
<div class="t" style="left:112.5px;top:297px;letter-spacing:0.182px">APIs</div>
<div class="t" style="left:153.0px;top:324px;">Function</div>
<div class="t" style="left:153.0px;top:351px;letter-spacing:0.083px">Loop Control</div>
<div class="t" style="left:153.0px;top:378px;">Transmission Co</div>
<div class="t" style="left:153.0px;top:405px;">Four Arithmetic</div>
<div class="t" style="left:153.0px;top:432px;">Rotation and Dis</div>
<div class="t" style="left:153.0px;top:459px;">Data Processing</div>
<div class="t" style="left:153.0px;top:486px;">High-Speed Proc</div>
<div class="t" style="left:153.0px;top:513px;">Handy Instructio</div>
</div>
<div class="a" style="left:276px;top:232px;width:24px;height:527px;background:#f0f0f0"></div>
<div class="a" style="left:276px;top:257px;width:23px;height:259px;background:#cdcdcd"></div>
<div class="a" style="left:6px;top:759px;width:294px;height:25px;background:#f0f0f0"></div>
<div class="a" style="left:32px;top:760px;width:127px;height:22px;background:#cdcdcd"></div>
<svg style="left:0;top:199px" width="304" height="600" viewBox="0 199 304 600"><g fill="none" stroke="#5c5c5c" stroke-width="2.700"><path d="M282 248.500l5.500-5.500 5.500 5.500"/><path d="M282 742.500l5.500 5.500 5.500-5.500"/><path d="M21.500 765.500l-5.500 5.500 5.500 5.500"/><path d="M259 765.500l5.500 5.500-5.500 5.500"/></g></svg>
</body></html>
